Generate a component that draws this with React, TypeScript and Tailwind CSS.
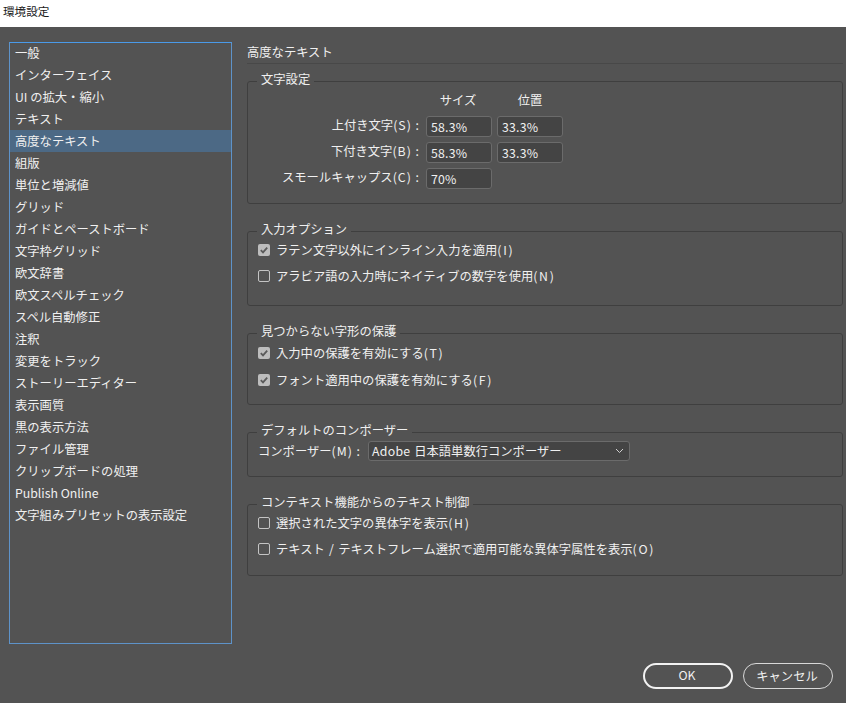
import { ReactNode } from 'react'

const menuItems = [
  '一般',
  'インターフェイス',
  'UI の拡大・縮小',
  'テキスト',
  '高度なテキスト',
  '組版',
  '単位と増減値',
  'グリッド',
  'ガイドとペーストボード',
  '文字枠グリッド',
  '欧文辞書',
  '欧文スペルチェック',
  'スペル自動修正',
  '注釈',
  '変更をトラック',
  'ストーリーエディター',
  '表示画質',
  '黒の表示方法',
  'ファイル管理',
  'クリップボードの処理',
  'Publish Online',
  '文字組みプリセットの表示設定',
]

function Group({ title, className, children }: { title: string; className: string; children: ReactNode }) {
  return (
    <fieldset className={`rounded-[3px] border border-[#3f3f3f] ${className}`}>
      <legend className="ml-[9px] px-[4px] h-[16px] leading-[13px]">{title}</legend>
      {children}
    </fieldset>
  )
}

function Check({ label, hotkey, checked }: { label: ReactNode; hotkey: string; checked?: boolean }) {
  return (
    <div className="flex items-center h-[22px] pl-[10px]">
      {checked ? (
        <span className="w-[12px] h-[12px] rounded-[2px] bg-[#bdbdbd] flex items-center justify-center">
          <svg width="10" height="10" viewBox="0 0 10 10" fill="none">
            <path d="M1.8 5.2 L4 7.4 L8.2 2.6" stroke="#5a5a5a" strokeWidth="1.8" />
          </svg>
        </span>
      ) : (
        <span className="w-[12px] h-[12px] rounded-[2px] border border-[#c4c4c4]" />
      )}
      <span className="ml-[6px]">
        {label}
        <span className="tracking-[1.7px]">{hotkey}</span>
      </span>
    </div>
  )
}

function Field({ value }: { value: string }) {
  return (
    <div className="h-[21px] rounded-[3px] border border-[#6b6b6b] bg-[#444444] pl-[4px] leading-[21px] tracking-[0.2px]">
      {value}
    </div>
  )
}

function RowLabel({ label, hotkey }: { label: string; hotkey: string }) {
  return (
    <div className="text-right pr-[1px] mt-[-2px]">
      {label}
      <span className="tracking-[1px]">{hotkey}</span>
    </div>
  )
}

export default function App() {
  return (
    <div className="w-[846px] h-[703px] overflow-hidden bg-[#535353] text-[12.3px] text-[#f0f0f0] font-['Noto_Sans_CJK_JP','Noto_Sans',sans-serif]">
      <div className="h-[27px] bg-white text-[#1a1a1a] text-[11.6px] pl-[3px] leading-[22px]">環境設定</div>
      <div className="flex">
        <div className="ml-[9px] mt-[15px] w-[223px] h-[602px] border border-[#5e93c9] border-t-[#4a9ae8] shrink-0">
          <div className="mt-[-1px]">
            {menuItems.map((item, i) => (
              <div key={item} className={`h-[22px] leading-[23px] pl-[5px] ${i === 4 ? 'bg-[#4c6985]' : ''}`}>
                {item}
              </div>
            ))}
          </div>
        </div>
        <div className="ml-[15px] w-[596px]">
          <div className="h-[37px] pt-[16px] leading-[18px] border-b border-[#484848]">高度なテキスト</div>
          <div className="mt-[9px] flex flex-col gap-[19px]">
            <Group title="文字設定" className="h-[131px]">
              <div className="grid grid-cols-[173px_66px_66px] gap-x-[5px] gap-y-[5px] items-center">
                <div />
                <div className="h-[16px] mt-[3px] mb-[3px] leading-[16px] text-center ml-[-2px]">サイズ</div>
                <div className="h-[16px] mt-[3px] mb-[3px] leading-[16px] text-center">位置</div>
                <RowLabel label="上付き文字" hotkey="(S) :" />
                <Field value="58.3%" />
                <Field value="33.3%" />
                <RowLabel label="下付き文字" hotkey="(B) :" />
                <Field value="58.3%" />
                <Field value="33.3%" />
                <RowLabel label="スモールキャップス" hotkey="(C) :" />
                <Field value="70%" />
              </div>
            </Group>
            <Group title="入力オプション" className="h-[83px]">
              <div className="flex flex-col gap-[4px]">
                <Check checked label="ラテン文字以外にインライン入力を適用" hotkey="(I)" />
                <Check label="アラビア語の入力時にネイティブの数字を使用" hotkey="(N)" />
              </div>
            </Group>
            <Group title="見つからない字形の保護" className="h-[80px]">
              <div className="flex flex-col gap-[5px] mt-[1px]">
                <Check checked label="入力中の保護を有効にする" hotkey="(T)" />
                <Check checked label="フォント適用中の保護を有効にする" hotkey="(F)" />
              </div>
            </Group>
            <Group title="デフォルトのコンポーザー" className="h-[53px]">
              <div className="flex items-center mt-[1px] pl-[10px]">
                <span className="w-[110px]">
                  コンポーザー<span className="tracking-[1px]">(M) :</span>
                </span>
                <div className="w-[262px] h-[20px] rounded-[3px] border border-[#6b6b6b] bg-[#444444] pl-[3px] flex items-center justify-between">
                  <span>
                    <span className="tracking-[0.3px] mr-[1px]">Adobe</span> 日本語単数行コンポーザー
                  </span>
                  <svg className="mr-[5px]" width="9" height="6" viewBox="0 0 9 6" fill="none">
                    <path d="M1 1 L4.5 4.5 L8 1" stroke="#d0d0d0" strokeWidth="1" />
                  </svg>
                </div>
              </div>
            </Group>
            <Group title="コンテキスト機能からのテキスト制御" className="h-[80px]">
              <div className="flex flex-col gap-[4px]">
                <Check label="選択された文字の異体字を表示" hotkey="(H)" />
                <Check
                  label={
                    <>
                      テキスト<span className="mx-[1.5px]"> / </span>テキストフレーム選択で適用可能な異体字属性を表示
                    </>
                  }
                  hotkey="(O)"
                />
              </div>
            </Group>
          </div>
          <div className="mt-[87px] pr-[10px] flex justify-end gap-[10px]">
            <button className="w-[90px] h-[26px] pr-[2px] pb-[1px] rounded-full border-2 border-[#f2f2f2]">OK</button>
            <button className="w-[90px] h-[26px] pr-[2px] rounded-full border border-[#d8d8d8]">キャンセル</button>
          </div>
        </div>
      </div>
    </div>
  )
}
